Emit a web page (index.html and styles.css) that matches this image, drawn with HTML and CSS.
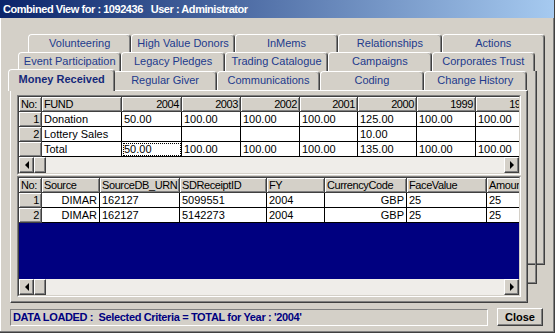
FILE: index.html
```html
<!DOCTYPE html>
<html lang="en">
<head>
    <meta charset="UTF-8">
    <title>Combined View</title>
    <link rel="stylesheet" href="styles.css">
</head>
<body>
<div class="window">
    <div class="titlebar">Combined View for : 1092436&nbsp;&nbsp; User : Administrator</div>

    <div class="client">
        <div class="tabctl">
            <!-- pages of the back tab rows, seen only at their right and bottom edges -->
            <div class="backpage back1"></div>
            <div class="backpage back2"></div>

            <div class="tabrow row1">
                <div class="tab">Volunteering</div>
                <div class="tab">High Value Donors</div>
                <div class="tab">InMems</div>
                <div class="tab">Relationships</div>
                <div class="tab">Actions</div>
            </div>
            <div class="tabrow row2">
                <div class="tab">Event Participation</div>
                <div class="tab">Legacy Pledges</div>
                <div class="tab">Trading Catalogue</div>
                <div class="tab">Campaigns</div>
                <div class="tab">Corporates Trust</div>
            </div>
            <div class="tabrow row3">
                <div class="tab active">Money Received</div>
                <div class="tab">Regular Giver</div>
                <div class="tab">Communications</div>
                <div class="tab">Coding</div>
                <div class="tab">Change History</div>
            </div>

            <div class="page">
                <!-- totals by fund and year -->
                <div class="grid grid1">
                    <div class="grid-body">
                        <div class="cells cols1">
                            <div class="fixed">No:</div>
                            <div class="fixed">FUND</div>
                            <div class="fixed r">2004</div>
                            <div class="fixed r">2003</div>
                            <div class="fixed r">2002</div>
                            <div class="fixed r">2001</div>
                            <div class="fixed r">2000</div>
                            <div class="fixed r">1999</div>
                            <div class="fixed r">1998</div>

                            <div class="fixed r">1</div>
                            <div>Donation</div>
                            <div>50.00</div>
                            <div>100.00</div>
                            <div>100.00</div>
                            <div>100.00</div>
                            <div>125.00</div>
                            <div>100.00</div>
                            <div>100.00</div>

                            <div class="fixed r">2</div>
                            <div>Lottery Sales</div>
                            <div></div>
                            <div></div>
                            <div></div>
                            <div></div>
                            <div>10.00</div>
                            <div></div>
                            <div></div>

                            <div class="fixed"></div>
                            <div>Total</div>
                            <div class="focus">50.00</div>
                            <div>100.00</div>
                            <div>100.00</div>
                            <div>100.00</div>
                            <div>135.00</div>
                            <div>100.00</div>
                            <div>100.00</div>
                        </div>
                        <div class="hscroll">
                            <div class="sb-btn"><span class="arrow-left"></span></div>
                            <div class="sb-thumb"></div>
                            <div class="sb-track"></div>
                            <div class="sb-btn"><span class="arrow-right"></span></div>
                        </div>
                    </div>
                </div>

                <!-- receipts behind the selected total -->
                <div class="grid grid2">
                    <div class="grid-body">
                        <div class="cells cols2">
                            <div class="fixed">No:</div>
                            <div class="fixed">Source</div>
                            <div class="fixed">SourceDB_URN</div>
                            <div class="fixed">SDReceiptID</div>
                            <div class="fixed">FY</div>
                            <div class="fixed">CurrencyCode</div>
                            <div class="fixed">FaceValue</div>
                            <div class="fixed">Amount</div>

                            <div class="fixed r">1</div>
                            <div class="r">DIMAR</div>
                            <div>162127</div>
                            <div>5099551</div>
                            <div>2004</div>
                            <div class="r">GBP</div>
                            <div>25</div>
                            <div>25</div>

                            <div class="fixed r">2</div>
                            <div class="r">DIMAR</div>
                            <div>162127</div>
                            <div>5142273</div>
                            <div>2004</div>
                            <div class="r">GBP</div>
                            <div>25</div>
                            <div>25</div>
                        </div>
                        <div class="hscroll">
                            <div class="sb-btn"><span class="arrow-left"></span></div>
                            <div class="sb-thumb"></div>
                            <div class="sb-track"></div>
                            <div class="sb-btn"><span class="arrow-right"></span></div>
                        </div>
                    </div>
                </div>
            </div>
        </div>

        <div class="footer">
            <div class="status">DATA LOADED :&nbsp; Selected Criteria = TOTAL for Year : '2004'</div>
            <button class="close" type="button">Close</button>
        </div>
    </div>
</div>
</body>
</html>
```

FILE: styles.css
```css
/* Classic dialog look */
body {
    margin: 0;
    font-family: "Liberation Sans", Arial, sans-serif;
    font-size: 11px;
    color: #000;
    background: #d4d0c8;
}

.window {
    width: 555px;
    height: 333px;
    box-sizing: border-box;
    background: #d4d0c8;
    border-right: 1px solid #404040;
    border-bottom: 1px solid #404040;
    box-shadow: inset -1px -1px #808080, inset 1px 1px #fff;
    display: flex;
    flex-direction: column;
}

.titlebar {
    height: 18px;
    line-height: 18px;
    padding-left: 3px;
    background: linear-gradient(to right, #0a246a, #a6caf0);
    color: #fff;
    font-weight: bold;
    letter-spacing: -0.45px;
    white-space: nowrap;
}

.client {
    padding-top: 16px;
}

/* Tab control */
.tabctl {
    position: relative;
}

.backpage {
    position: absolute;
    height: 213px;
    box-sizing: border-box;
    border-right: 1px solid #404040;
    border-bottom: 1px solid #404040;
    box-shadow: inset -1px -1px #808080;
    z-index: 1;
}

.back1 {
    left: 28px;
    top: 18px;
    width: 517px;
}

.back2 {
    left: 18px;
    top: 37px;
    width: 519px;
}

.tabrow {
    display: flex;
    height: 19px;
    position: relative;
    z-index: 2;
}

.row1 {
    height: 18px;
    margin-left: 28px;
}

.row2 {
    margin-left: 18px;
}

.row3 {
    margin-left: 10px;
    z-index: 4;
}

.tab {
    flex: none;
    width: 103.4px;
    box-sizing: border-box;
    border: 1px solid #fff;
    border-right-color: #404040;
    border-bottom: none;
    border-radius: 4px 4px 0 0;
    box-shadow: inset -1px 0 #808080;
    background: #d4d0c8;
    color: #223a8c;
    text-align: center;
    line-height: 17px;
    white-space: nowrap;
}

.tab.active {
    width: 107.4px;
    margin: -2px -2px -1px -2px;
    position: relative;
    z-index: 5;
    font-weight: bold;
    color: #14297a;
    line-height: 19px;
}

.page {
    position: relative;
    z-index: 3;
    margin-left: 10px;
    width: 518px;
    height: 213px;
    box-sizing: border-box;
    border: 1px solid #fff;
    border-right-color: #404040;
    border-bottom-color: #404040;
    box-shadow: inset -1px -1px #808080;
    background: #d4d0c8;
    padding: 4px 0 0 6px;
}

/* Grids */
.grid {
    width: 504px;
    box-sizing: border-box;
    border: 1px solid #808080;
    border-right-color: #fff;
    border-bottom-color: #fff;
}

.grid2 {
    margin-top: 1px;
    height: 121px;
}

.grid-body {
    height: 100%;
    box-sizing: border-box;
    border: 1px solid #404040;
    border-right-color: #d4d0c8;
    border-bottom-color: #d4d0c8;
    display: flex;
    flex-direction: column;
}

.cells {
    display: grid;
    grid-auto-rows: 15px;
    align-content: start;
    overflow: hidden;
    background: #fff;
}

.cols1 {
    grid-template-columns: 23px 80px 60px 59px 59px 58px 59px 59px 59px;
}

.cols2 {
    flex: 1;
    background: #000080;
    grid-template-columns: 23px 58px 80px 87px 58px 82px 80px 80px;
}

.cells > div {
    box-sizing: border-box;
    border-right: 1px solid #000;
    border-bottom: 1px solid #000;
    padding: 0 2px;
    line-height: 14px;
    white-space: nowrap;
    overflow: hidden;
    background: #fff;
}

.cells > .fixed {
    background: #d4d0c8;
    box-shadow: inset 1px 1px #fff, inset -1px -1px #808080;
    border-right-color: #404040;
    border-bottom-color: #404040;
    letter-spacing: -0.4px;
}

.cells > .r {
    text-align: right;
}

.cells > .focus {
    outline: 1px dotted #000;
    outline-offset: -2px;
}

/* Horizontal scrollbar */
.hscroll {
    height: 16px;
    display: flex;
    background: #efede9;
}

.sb-btn,
.sb-thumb {
    box-sizing: border-box;
    height: 16px;
    border: 1px solid #fff;
    border-right-color: #404040;
    border-bottom-color: #404040;
    box-shadow: inset -1px -1px #808080;
    background: #d4d0c8;
}

.sb-btn {
    width: 15px;
    display: flex;
    align-items: center;
    justify-content: center;
}

.sb-thumb {
    width: 12px;
}

.sb-track {
    flex: 1;
}

.arrow-left {
    border-top: 4px solid transparent;
    border-bottom: 4px solid transparent;
    border-right: 4px solid #000;
}

.arrow-right {
    border-top: 4px solid transparent;
    border-bottom: 4px solid transparent;
    border-left: 4px solid #000;
}

/* Status line and button */
.footer {
    display: flex;
    align-items: center;
    margin-top: 5px;
    padding-left: 10px;
}

.status {
    width: 478px;
    height: 17px;
    box-sizing: border-box;
    border: 1px solid #808080;
    border-right-color: #fff;
    border-bottom-color: #fff;
    padding-left: 2px;
    line-height: 15px;
    color: #000080;
    font-weight: bold;
    letter-spacing: -0.35px;
    white-space: nowrap;
}

.close {
    margin-left: 9px;
    width: 46px;
    height: 18px;
    padding: 0;
    box-sizing: border-box;
    border: 1px solid #fff;
    border-right-color: #404040;
    border-bottom-color: #404040;
    box-shadow: inset -1px -1px #808080;
    background: #d4d0c8;
    font: inherit;
    font-weight: bold;
    color: #000;
}
```
